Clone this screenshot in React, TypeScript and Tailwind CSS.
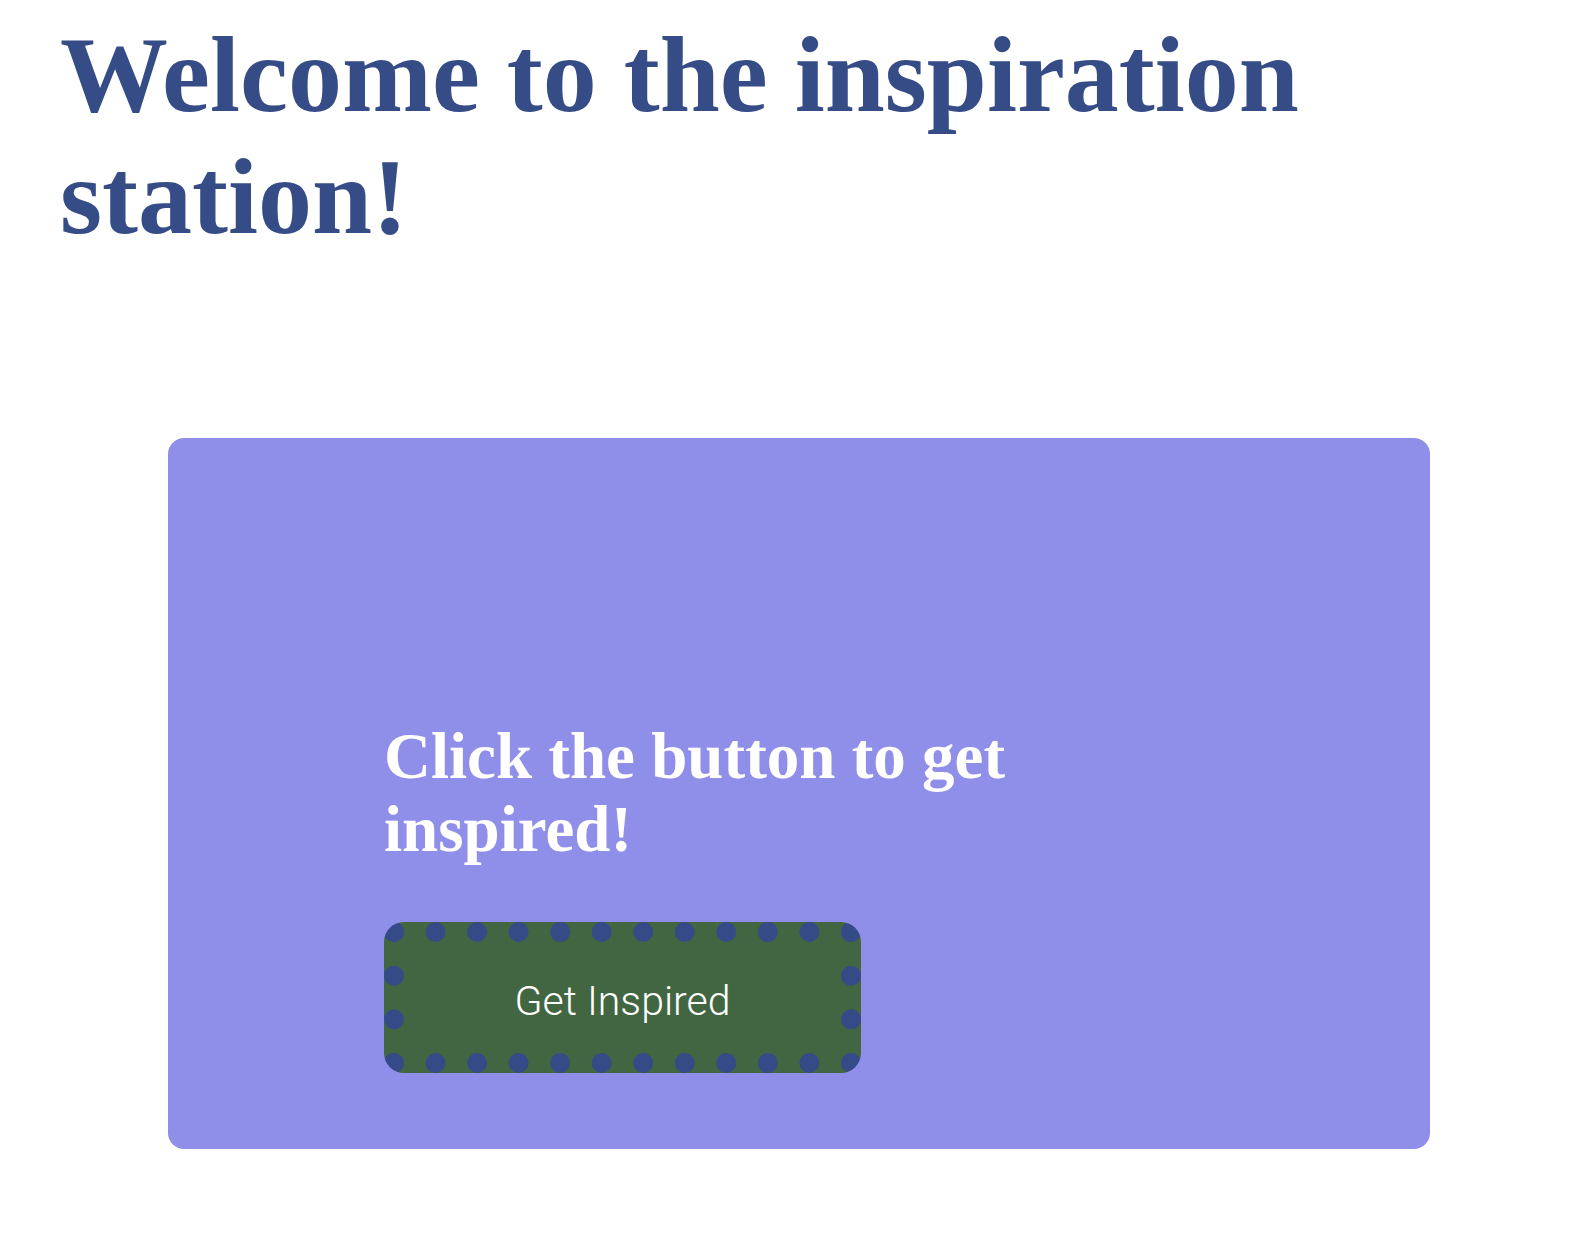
export default function App() {
  return (
    <div className="min-h-screen bg-white">
      <h1 className="w-[1400px] px-[60px] pt-[14px] font-['Liberation_Serif',serif] text-[108px] font-bold leading-[122px] text-[#364c87]">
        Welcome to the inspiration station!
      </h1>
      <div className="ml-[168px] mt-[180px] h-[711px] w-[1262px] rounded-2xl bg-[#8f8fea] pl-[216px] pt-[282px]">
        <h2 className="w-[660px] font-['Liberation_Serif',serif] text-[65px] font-bold leading-[73px] text-white">
          Click the button to get inspired!
        </h2>
        <button className="mt-[56px] flex h-[151px] w-[477px] items-center justify-center rounded-[20px] border-[20px] border-dotted border-[#354b88] bg-[#426641] pt-[8px] font-['Roboto_Slab','Roboto',serif] text-[41px] font-light text-white">
          Get Inspired
        </button>
      </div>
    </div>
  )
}
